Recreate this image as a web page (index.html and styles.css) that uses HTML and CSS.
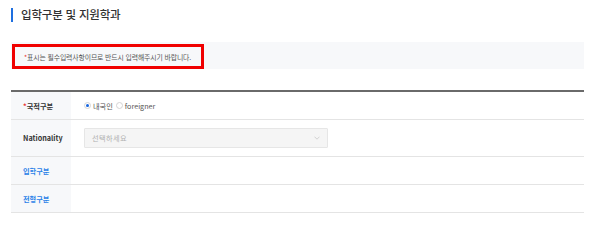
FILE: index.html
```html
<!DOCTYPE html>
<html lang="ko">
<head>
<meta charset="utf-8">
<title>입학구분 및 지원학과</title>
<link rel="stylesheet" href="styles.css">
</head>
<body>
<div class="page">
  <h2 class="title">입학구분 및 지원학과</h2>
  <div class="notice">
    <span class="notice-text"><span class="req">*</span>표시는 필수입력사항이므로 반드시 입력해주시기 바랍니다.</span>
  </div>
  <div class="form">
    <div class="row row-sm">
      <div class="label"><span class="req">*</span>국적구분</div>
      <div class="field">
        <label class="radio"><span class="dot on"></span>내국인</label>
        <label class="radio"><span class="dot"></span>foreigner</label>
      </div>
    </div>
    <div class="row row-lg">
      <div class="label">Nationality</div>
      <div class="field">
        <div class="select">
          <span>선택하세요</span>
          <svg class="chev" width="6" height="4" viewBox="0 0 6 4"><path d="M0.5 0.7 L3 3.2 L5.5 0.7" fill="none" stroke="#c8c8c8" stroke-width="0.8"/></svg>
        </div>
      </div>
    </div>
    <div class="row row-sm">
      <div class="label blue">입학구분</div>
      <div class="field"></div>
    </div>
    <div class="row row-sm">
      <div class="label blue">전형구분</div>
      <div class="field"></div>
    </div>
  </div>
</div>
</body>
</html>
```

FILE: styles.css
```css
* { box-sizing: border-box; }
body {
  margin: 0;
  background: #fff;
  font-family: "Noto Sans CJK KR", "Noto Sans", sans-serif;
  color: #333;
}
.page {
  width: 584px;
  padding: 8px 0 0 11px;
}
.title {
  margin: 0;
  height: 14px;
  display: flex;
  align-items: center;
  font-size: 11.5px;
  font-weight: 500;
  color: #333;
  letter-spacing: -0.2px;
  padding-left: 8px;
  border-left: 2px solid #1e6fe0;
  line-height: 1;
}
.notice {
  margin-top: 20px;
  height: 27px;
  background: #f7f8fa;
  display: flex;
  align-items: flex-end;
  padding-left: 1px;
}
.notice-text {
  display: flex;
  align-items: center;
  width: 192px;
  height: 25px;
  border: 3px solid #f00000;
  padding-left: 9px;
  font-size: 6.85px;
  color: #555;
  letter-spacing: -0.1px;
  white-space: nowrap;
}
.req { color: #e8312f; }
.form {
  margin-top: 21px;
  border-top: 2px solid #6a6a6a;
}
.row {
  display: grid;
  grid-template-columns: 60px 1fr;
  border-bottom: 1px solid #e4e4e4;
}
.row-sm { height: 28px; }
.row-lg { height: 37px; }
.label {
  background: #f7f8fa;
  display: flex;
  align-items: center;
  padding-left: 12px;
  font-size: 7.2px;
  font-weight: 700;
  color: #333;
}
.label.blue { color: #2b82e8; }
.field {
  display: flex;
  align-items: center;
  padding-left: 13px;
}
.radio {
  display: flex;
  align-items: center;
  font-size: 7.2px;
  color: #555;
  margin-right: 3px;
}
.dot {
  width: 7px;
  height: 7px;
  border-radius: 50%;
  border: 1px solid #d4d4d4;
  background: #fff;
  margin-right: 2px;
  display: flex;
  align-items: center;
  justify-content: center;
}
.dot.on::after {
  content: "";
  width: 3px;
  height: 3px;
  border-radius: 50%;
  background: #1565e0;
}
.select {
  width: 244px;
  height: 20px;
  background: #f5f5f5;
  border: 1px solid #e6e6e6;
  border-radius: 1px;
  display: flex;
  align-items: center;
  justify-content: space-between;
  padding: 0 7px 0 7px;
  font-size: 7.2px;
  color: #b0b0b0;
  letter-spacing: 0.4px;
}
```
